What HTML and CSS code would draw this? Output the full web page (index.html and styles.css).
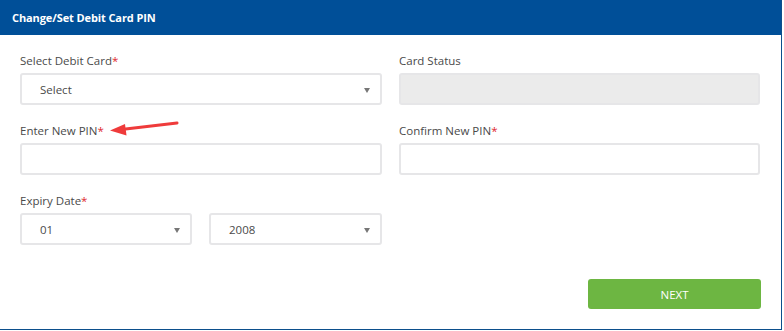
FILE: index.html
```html
<!DOCTYPE html>
<html>
<head>
<meta charset="utf-8">
<link rel="stylesheet" href="styles.css">
</head>
<body>
<div class="panel">
  <div class="panel-head">Change/Set Debit Card PIN</div>
  <div class="panel-body">
    <div class="grid">
      <div class="field">
        <div class="label">Select Debit Card<span class="req">*</span></div>
        <div class="control select"><span>Select</span><span class="caret"></span></div>
      </div>
      <div class="field">
        <div class="label">Card Status</div>
        <div class="control disabled"></div>
      </div>
      <div class="field">
        <div class="label">Enter New PIN<span class="req">*</span></div>
        <div class="control"></div>
      </div>
      <div class="field">
        <div class="label">Confirm New PIN<span class="req">*</span></div>
        <div class="control"></div>
      </div>
      <div class="field">
        <div class="label">Expiry Date<span class="req">*</span></div>
        <div class="pair">
          <div class="control select"><span>01</span><span class="caret"></span></div>
          <div class="control select"><span>2008</span><span class="caret"></span></div>
        </div>
      </div>
    </div>
    <div class="actions">
      <button class="btn-next">NEXT</button>
    </div>
  </div>
  <svg class="annot" width="80" height="26" viewBox="0 0 80 26">
    <line x1="72" y1="11" x2="12" y2="18" stroke="#ef3b3b" stroke-width="3" stroke-linecap="round"/>
    <polygon points="5,18.5 20,12 21.5,23.5" fill="#ef3b3b"/>
  </svg>
</div>
</body>
</html>
```
FILE: styles.css
```css
* { box-sizing: border-box; }
html, body { margin: 0; padding: 0; background: #fff; }
body { font-family: "Open Sans", "Noto Sans", sans-serif; }
.panel {
  position: relative;
  width: 782px;
  height: 330px;
  border-right: 1px solid #0c4f8c;
  border-bottom: 1px solid #0c4f8c;
  background: #fff;
}
.panel-head {
  height: 35px;
  background: #004f98;
  color: #fff;
  font-weight: 700;
  font-size: 11px;
  line-height: 35px;
  padding-left: 12px;
  letter-spacing: -0.1px;
}
.panel-body {
  padding: 18px 20px 0 20px;
}
.grid {
  display: grid;
  grid-template-columns: 362px 361px;
  column-gap: 17px;
  row-gap: 18px;
}
.label {
  font-size: 11.5px;
  line-height: 16px;
  color: #4a4a4a;
  margin-bottom: 4px;
}
.req { color: #e0282e; }
.control {
  height: 32px;
  border: 2px solid #e6e6e8;
  border-radius: 3px;
  background: #fff;
}
.control.disabled { background: #ebebeb; }
.select {
  display: flex;
  align-items: center;
  justify-content: space-between;
  padding: 0 10px 0 18px;
  font-size: 11.5px;
  color: #4a4a4a;
}
.caret {
  width: 0;
  height: 0;
  border-left: 3px solid transparent;
  border-right: 3px solid transparent;
  border-top: 5px solid #777;
  margin-top: 2px;
}
.pair {
  display: grid;
  grid-template-columns: 172px 173px;
  column-gap: 17px;
}
.actions {
  display: flex;
  justify-content: flex-end;
  padding-top: 34px;
}
.btn-next {
  width: 173px;
  height: 30px;
  border: none;
  border-radius: 3px;
  background: #6db642;
  color: #fff;
  font-family: "Open Sans", "Noto Sans", sans-serif;
  font-size: 11.5px;
  padding: 0;
}
.annot {
  position: absolute;
  left: 105px;
  top: 112px;
}
```
